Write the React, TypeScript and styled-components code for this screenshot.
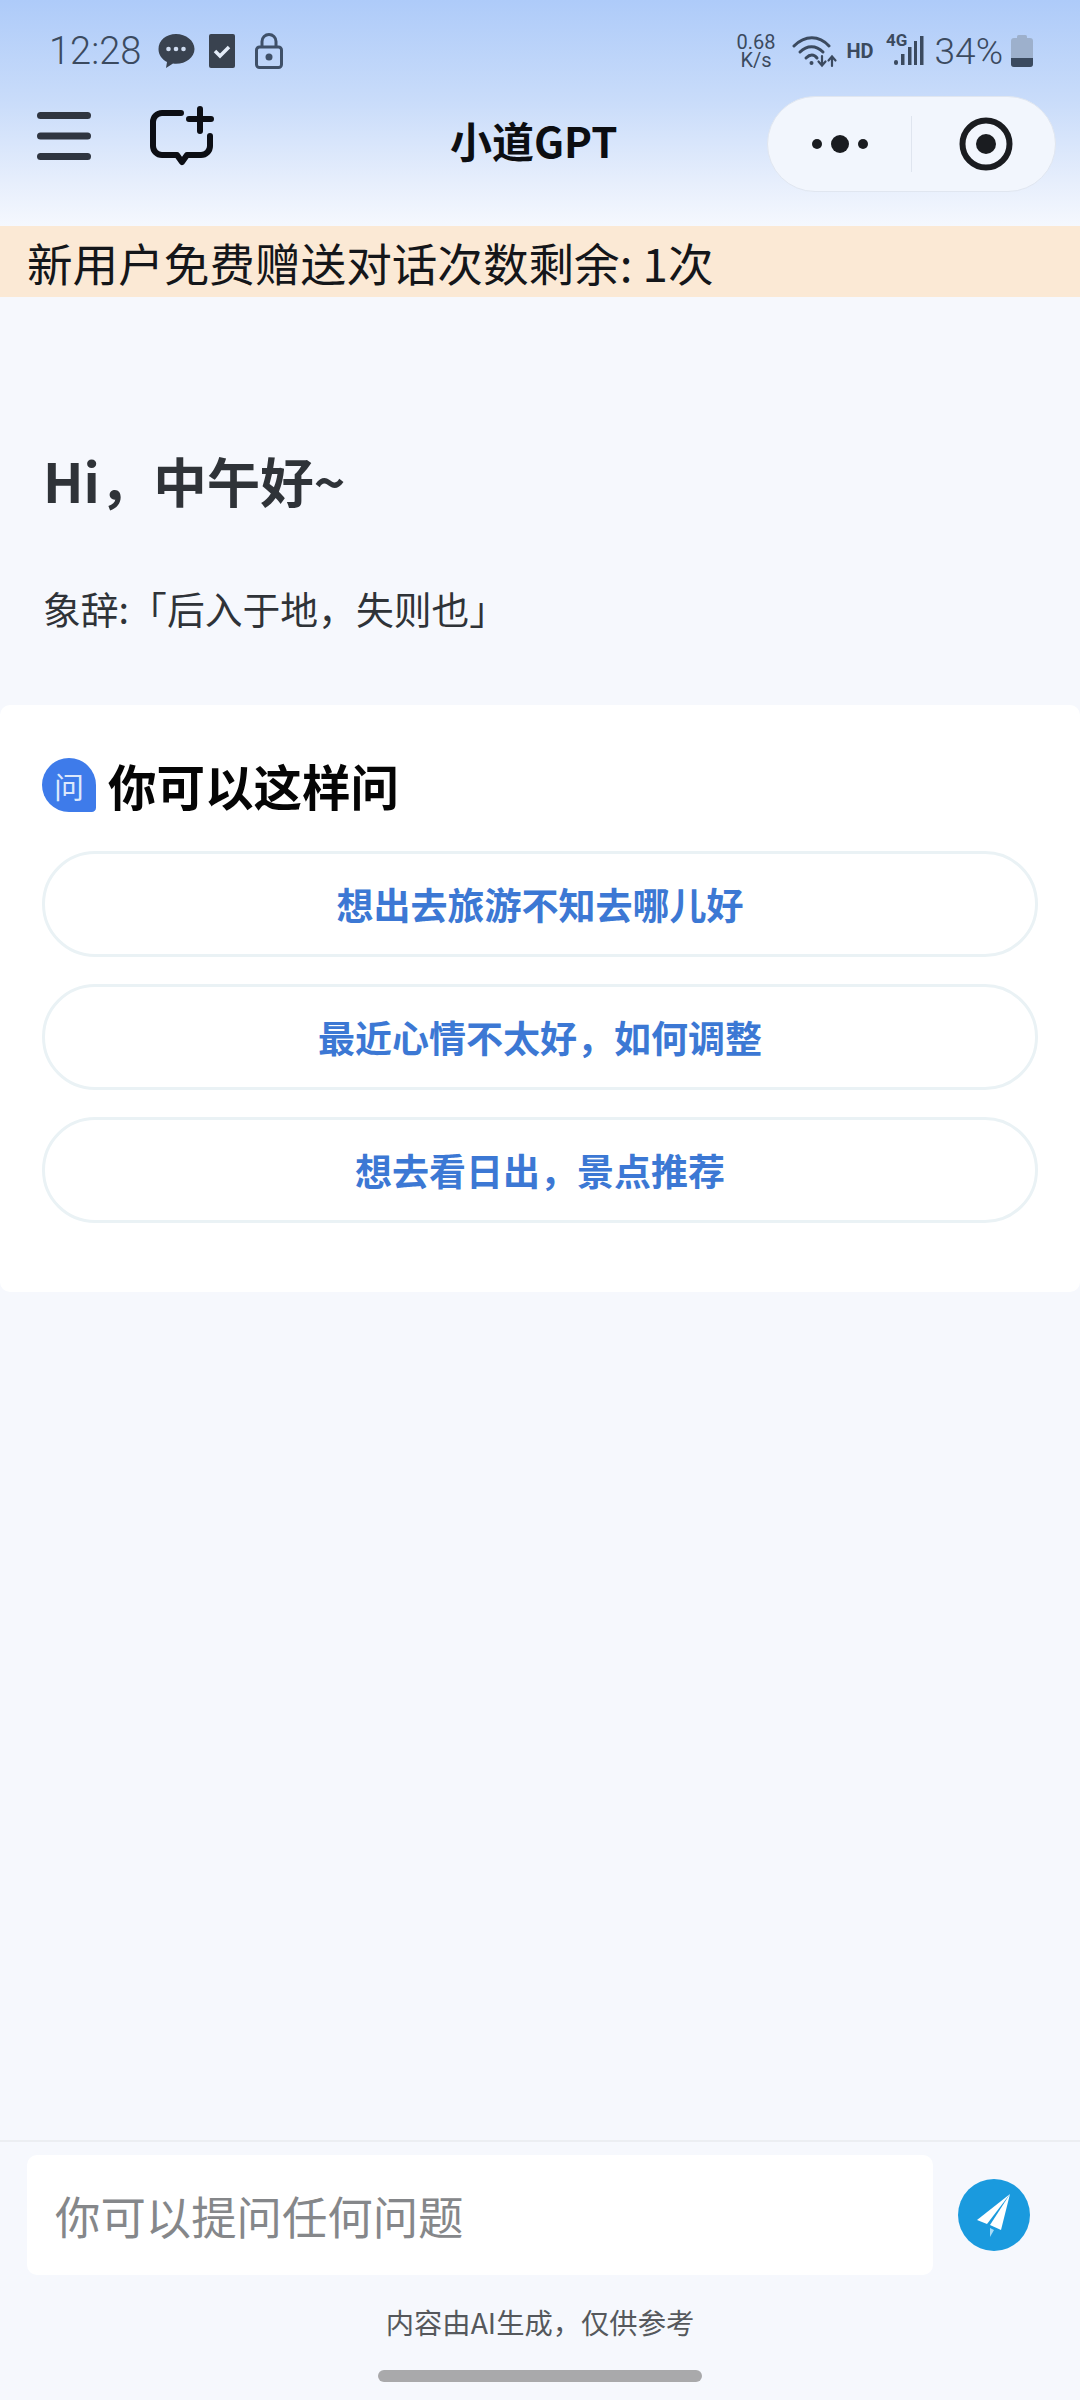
import styled, { createGlobalStyle } from 'styled-components'

const GlobalStyle = createGlobalStyle`
  html, body {
    margin: 0;
    padding: 0;
    background: #f6f8fd;
    font-family: 'Noto Sans CJK SC', 'Noto Sans', sans-serif;
  }
`

const Page = styled.div`
  width: 1080px;
  height: 2400px;
  display: flex;
  flex-direction: column;
  overflow: hidden;
  background: #f6f8fd;
`

const Header = styled.header`
  height: 226px;
  box-sizing: border-box;
  padding-top: 29px;
  background: linear-gradient(180deg, #aecbf9 0%, #c9dcfa 45%, #e6eefc 80%, #f5f8fe 100%);
`

const StatusBar = styled.div`
  height: 44px;
  padding: 0 47px 0 49px;
  display: flex;
  align-items: center;
  justify-content: space-between;
  color: #3b4a5f;
`

const StatusGroup = styled.div`
  display: flex;
  align-items: center;
`

const Clock = styled.span`
  font-family: Roboto, sans-serif;
  font-size: 38px;
  font-weight: 300;
  margin-right: 16px;
`

const NetSpeed = styled.div`
  display: flex;
  flex-direction: column;
  margin-right: 17px;
`

const NetLine = styled.div`
  height: 18px;
  overflow: visible;
  font-family: Roboto, sans-serif;
  font-size: 20px;
  line-height: 18px;
  text-align: center;
`

const Hd = styled.span`
  font-family: Roboto, sans-serif;
  font-size: 20px;
  font-weight: 700;
  margin: 0 12px 0 8px;
`

const Percent = styled.span`
  font-family: Roboto, sans-serif;
  font-size: 37px;
  font-weight: 300;
  margin: 0 8px 0 11px;
`

const Nav = styled.div`
  display: grid;
  grid-template-columns: 413px auto 1fr;
  align-items: center;
  height: 96px;
  margin-top: 23px;
  padding: 0 24px 0 37px;
`

const NavLeft = styled.div`
  display: flex;
  align-items: center;
  gap: 59px;
  margin-bottom: 16px;
`

const Title = styled.h1`
  margin: 0 0 10px;
  font-size: 42px;
  font-weight: 700;
  color: #0c0e12;
`

const Capsule = styled.div`
  justify-self: end;
  width: 289px;
  height: 96px;
  box-sizing: border-box;
  border: 1px solid #e0e6f0;
  border-radius: 48px;
  background: #f2f6fd;
  display: flex;
  align-items: center;
`

const CapsulePart = styled.div`
  flex: 1;
  height: 56px;
  display: flex;
  align-items: center;
  justify-content: center;
  & + & {
    border-left: 1px solid #dfe5ef;
  }
`

const Banner = styled.div`
  height: 71px;
  padding-left: 27px;
  display: flex;
  align-items: center;
  font-size: 45.6px;
  color: #14161a;
  background: #fbe9d5;
`

const Hero = styled.section`
  height: 408px;
  box-sizing: border-box;
  padding: 143px 43px 0;
  color: #2f3338;
`

const Greeting = styled.h2`
  margin: 0;
  font-size: 53.5px;
  line-height: 80px;
  font-weight: 700;
`

const Quote = styled.p`
  margin: 58px 0 0;
  font-size: 37.8px;
  line-height: 60px;
`

const Card = styled.section`
  height: 587px;
  box-sizing: border-box;
  padding: 47px 42px 0;
  background: #fff;
  border-radius: 10px;
`

const CardHead = styled.div`
  display: flex;
  align-items: center;
  gap: 12px;
  height: 66px;
  margin-bottom: 33px;
`

const AskBadge = styled.div`
  width: 54px;
  height: 54px;
  border-radius: 50% 50% 8% 50%;
  background: #3e7bea;
  color: #dce8fc;
  font-size: 30px;
  line-height: 54px;
  text-align: center;
`

const CardTitle = styled.h3`
  margin: 0;
  font-size: 48.5px;
  font-weight: 700;
  color: #050505;
`

const Suggestions = styled.div`
  display: flex;
  flex-direction: column;
  gap: 27px;
`

const Suggestion = styled.button`
  height: 106px;
  border: 3px solid #eaf2f5;
  border-radius: 53px;
  background: #fff;
  font-family: inherit;
  font-size: 37px;
  font-weight: 700;
  color: #3c78d4;
`

const Spacer = styled.div`
  flex: 1;
`

const Footer = styled.footer`
  height: 260px;
  box-sizing: border-box;
  border-top: 2px solid #eceef2;
  padding: 13px 27px 0;
`

const InputRow = styled.div`
  display: flex;
  align-items: center;
`

const Input = styled.div`
  width: 906px;
  height: 120px;
  box-sizing: border-box;
  padding-left: 28px;
  border-radius: 10px;
  background: #fff;
  display: flex;
  align-items: center;
  font-size: 45.4px;
  color: #85878a;
`

const SendButton = styled.button`
  width: 72px;
  height: 72px;
  margin-left: 25px;
  padding: 0;
  border: none;
  border-radius: 50%;
  background: #1a9ade;
  display: grid;
  place-content: center;
`

const Disclaimer = styled.div`
  margin-top: 27px;
  text-align: center;
  font-size: 28.3px;
  line-height: 40px;
  color: #55585c;
`

const HomeBar = styled.div`
  width: 324px;
  height: 12px;
  margin: 28px auto 0;
  border-radius: 6px;
  background: #a9a9ab;
`

const ChatIcon = () => (
  <svg width="38" height="38" viewBox="0 0 38 38" style={{ marginRight: 14 }}>
    <path d="M19 2C9 2 1.500 8.500 1.500 17c0 6 3.500 10.500 8.500 13l-1 6 7-4.500c1 .2 2 .3 3 .3 10 0 18.500-6.500 18.500-14.800S29 2 19 2z" fill="#39424f" />
    <circle cx="11.500" cy="17" r="2.300" fill="#cfdcf0" />
    <circle cx="19" cy="17" r="2.300" fill="#cfdcf0" />
    <circle cx="26.500" cy="17" r="2.300" fill="#cfdcf0" />
  </svg>
)

const TaskIcon = () => (
  <svg width="26" height="34" viewBox="0 0 26 34" style={{ marginRight: 20 }}>
    <rect width="26" height="34" rx="2" fill="#39424f" />
    <path d="M6 17l5 5 9-9" fill="none" stroke="#e4ecf8" strokeWidth="3.500" />
  </svg>
)

const LockIcon = () => (
  <svg width="28" height="36" viewBox="0 0 28 36">
    <rect x="1.500" y="14" width="25" height="20.500" rx="3" fill="none" stroke="#3f5068" strokeWidth="3" />
    <path d="M7 14V8.500a7 7 0 0 1 14 0V14" fill="none" stroke="#3f5068" strokeWidth="3" />
    <circle cx="14" cy="24" r="3.500" fill="#3f5068" />
  </svg>
)

const WifiIcon = () => (
  <svg width="46" height="34" viewBox="0 0 46 34">
    <g fill="none" stroke="#3b4a5f" strokeWidth="3" strokeLinecap="round">
      <path d="M2 12C13 1 27 1 37 12" />
      <path d="M8 18c7-7 16-7 23 0" />
      <path d="M14 24c4-4 8-4 11 0" />
      <path d="M30 22v9M26.500 27.500l3.500 4 3.500-4" strokeWidth="2.200" />
      <path d="M40 32v-9M36.500 26.500l3.500-4 3.500 4" strokeWidth="2.200" />
    </g>
    <circle cx="19.500" cy="29" r="2" fill="#3b4a5f" />
  </svg>
)

const SignalIcon = () => (
  <svg width="38" height="38" viewBox="0 0 38 38" style={{ marginBottom: 8 }}>
    <text x="0" y="18" fontFamily="Roboto, sans-serif" fontSize="17" fontWeight="700" fill="#3b4a5f">4G</text>
    <rect x="8" y="32" width="4" height="5" rx="2" fill="#3b4a5f" />
    <rect x="15" y="26" width="3.500" height="11" fill="#3b4a5f" />
    <rect x="22" y="19" width="3.500" height="18" fill="#3b4a5f" />
    <rect x="28" y="13" width="3" height="24" fill="#3b4a5f" />
    <rect x="34" y="8" width="3.500" height="29" fill="#3b4a5f" />
  </svg>
)

const BatteryIcon = () => (
  <svg width="22" height="32" viewBox="0 0 22 32">
    <rect x="6" y="0" width="10" height="6" rx="1.500" fill="#9db0cc" />
    <rect x="0" y="3" width="22" height="29" rx="3" fill="#9db0cc" />
    <path d="M0 23h22v6a3 3 0 0 1-3 3H3a3 3 0 0 1-3-3z" fill="#3b4a5f" />
  </svg>
)

const MenuIcon = () => (
  <svg width="54" height="48" viewBox="0 0 54 48">
    <rect y="0" width="54" height="7" rx="3.500" fill="#2f3540" />
    <rect y="20.500" width="54" height="7" rx="3.500" fill="#2f3540" />
    <rect y="41" width="54" height="7" rx="3.500" fill="#2f3540" />
  </svg>
)

const NewChatIcon = () => (
  <svg width="64" height="60" viewBox="0 0 64 60">
    <path
      d="M31 7H12a9 9 0 0 0-9 9v24a9 9 0 0 0 9 9h15l5 7 5-7h14a9 9 0 0 0 9-9V30"
      fill="none"
      stroke="#0c0e14"
      strokeWidth="6"
      strokeLinecap="round"
      strokeLinejoin="round"
    />
    <path d="M50 3v22M39 13h22" fill="none" stroke="#0c0e14" strokeWidth="6" strokeLinecap="round" />
  </svg>
)

const MoreIcon = () => (
  <svg width="56" height="20" viewBox="0 0 56 20">
    <circle cx="5" cy="10" r="5" fill="#1a1c20" />
    <circle cx="28" cy="10" r="9" fill="#1a1c20" />
    <circle cx="51" cy="10" r="5" fill="#1a1c20" />
  </svg>
)

const TargetIcon = () => (
  <svg width="54" height="54" viewBox="0 0 54 54" style={{ marginLeft: 5 }}>
    <circle cx="27" cy="27" r="23.500" fill="none" stroke="#1a1c20" strokeWidth="6" />
    <circle cx="27" cy="27" r="10" fill="#1a1c20" />
  </svg>
)

const PlaneIcon = () => (
  <svg width="36" height="44" viewBox="0 0 36 44">
    <path d="M34 1L1 27l10 4z" fill="#fff" />
    <path d="M34 1L14 32l11 5z" fill="#fff" />
    <path d="M14 35l4 2-4 7z" fill="#a8dcf7" />
  </svg>
)

const prompts = ['想出去旅游不知去哪儿好', '最近心情不太好，如何调整', '想去看日出，景点推荐']

const App = () => (
  <Page>
    <GlobalStyle />
    <Header>
      <StatusBar>
        <StatusGroup>
          <Clock>12:28</Clock>
          <ChatIcon />
          <TaskIcon />
          <LockIcon />
        </StatusGroup>
        <StatusGroup>
          <NetSpeed>
            <NetLine>0.68</NetLine>
            <NetLine>K/s</NetLine>
          </NetSpeed>
          <WifiIcon />
          <Hd>HD</Hd>
          <SignalIcon />
          <Percent>34%</Percent>
          <BatteryIcon />
        </StatusGroup>
      </StatusBar>
      <Nav>
        <NavLeft>
          <MenuIcon />
          <NewChatIcon />
        </NavLeft>
        <Title>小道GPT</Title>
        <Capsule>
          <CapsulePart>
            <MoreIcon />
          </CapsulePart>
          <CapsulePart>
            <TargetIcon />
          </CapsulePart>
        </Capsule>
      </Nav>
    </Header>
    <Banner>新用户免费赠送对话次数剩余: 1次</Banner>
    <Hero>
      <Greeting>Hi，中午好~</Greeting>
      <Quote>象辞:「后入于地，失则也」</Quote>
    </Hero>
    <Card>
      <CardHead>
        <AskBadge>问</AskBadge>
        <CardTitle>你可以这样问</CardTitle>
      </CardHead>
      <Suggestions>
        {prompts.map((p) => (
          <Suggestion key={p}>{p}</Suggestion>
        ))}
      </Suggestions>
    </Card>
    <Spacer />
    <Footer>
      <InputRow>
        <Input>你可以提问任何问题</Input>
        <SendButton>
          <PlaneIcon />
        </SendButton>
      </InputRow>
      <Disclaimer>内容由AI生成，仅供参考</Disclaimer>
      <HomeBar />
    </Footer>
  </Page>
)

export default App
